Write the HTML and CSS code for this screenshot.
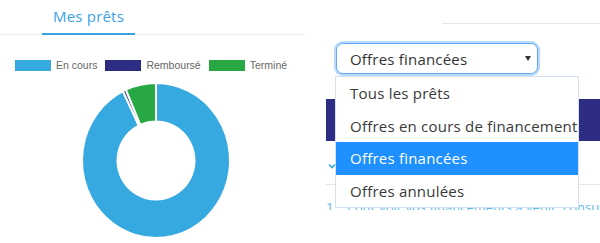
FILE: index.html
```html
<!DOCTYPE html>
<html lang="fr">
<head>
<meta charset="utf-8">
<title>Mes prêts</title>
<link rel="stylesheet" href="styles.css">
</head>
<body>
<div class="page">
  <section class="left">
    <nav class="tabs">
      <div class="tab active">Mes prêts</div>
    </nav>
    <ul class="legend">
      <li><span class="swatch s-blue"></span>En cours</li>
      <li><span class="swatch s-navy"></span>Remboursé</li>
      <li><span class="swatch s-green"></span>Terminé</li>
    </ul>
    <svg class="donut" width="300" height="165" viewBox="0 0 300 165">
      <path class="seg-blue" d="M156,5 A74,77.5 0 1 1 122.98,13.15 L138.82,47.6 A38.5,39 0 1 0 156,43.5 Z"/>
      <path class="seg-navy" d="M122.98,13.15 A74,77.5 0 0 1 125.90,11.70 L140.34,46.87 A38.5,39 0 0 0 138.82,47.6 Z"/>
      <path class="seg-green" d="M125.90,11.70 A74,77.5 0 0 1 156,5 L156,43.5 A38.5,39 0 0 0 140.34,46.87 Z"/>
    </svg>
  </section>
  <section class="right">
    <div class="topline"></div>
    <div class="table">
      <div class="thead"></div>
      <div class="row r1">
        <svg class="chev" width="8" height="6" viewBox="0 0 8 6"><path d="M1,1.5 L4,4.5 L7,1.5" fill="none" stroke="#36a9e1" stroke-width="1.6"/></svg>
      </div>
      <div class="row r2"><span class="rowtext">1 &nbsp;&nbsp; Pour voir vos financements à venir, consultez votre échéancier</span></div>
    </div>
  </section>

  <div class="select">
    <span class="select-value">Offres financées</span>
    <span class="caret"></span>
  </div>
  <ul class="menu">
    <li class="opt">Tous les prêts</li>
    <li class="opt">Offres en cours de financement</li>
    <li class="opt selected">Offres financées</li>
    <li class="opt">Offres annulées</li>
  </ul>
</div>
</body>
</html>
```
FILE: styles.css
```css
html, body {
  margin: 0;
  padding: 0;
  background: #ffffff;
}

.page {
  position: relative;
  width: 600px;
  height: 243px;
  overflow: hidden;
  display: flex;
  font-family: "Open Sans", "DejaVu Sans", sans-serif;
}

.left {
  width: 306px;
  flex: none;
  display: flex;
  flex-direction: column;
}

.tabs {
  height: 35px;
  box-sizing: border-box;
  border-bottom: 1px solid #eeeeee;
  display: flex;
  padding-left: 42px;
}

.tab {
  width: 93px;
  height: 35px;
  box-sizing: border-box;
  padding-top: 6px;
  text-align: center;
  font-size: 15px;
  line-height: 20px;
  letter-spacing: 0.2px;
  color: #3aa2e2;
}

.tab.active {
  border-bottom: 2px solid #3aa2e2;
}

.legend {
  list-style: none;
  margin: 25px 0 0 0;
  padding: 0 0 0 15px;
  display: flex;
  gap: 8px;
  height: 11px;
  font-family: "Liberation Sans", Arial, sans-serif;
  font-size: 10.5px;
  line-height: 11px;
  color: #666666;
}

.legend li {
  display: flex;
  align-items: center;
}

.swatch {
  width: 36px;
  height: 11px;
  margin-right: 5px;
  box-sizing: border-box;
}

.s-blue { background: #36a9e1; }
.s-navy { background: #2d2e83; border: 1px solid #28297a; }
.s-green { background: #27a844; }

.donut {
  display: block;
  margin-top: 7px;
}

.donut path {
  stroke: #ffffff;
  stroke-width: 2;
}

.seg-blue { fill: #36a9e1; }
.seg-navy { fill: #2d2e83; }
.seg-green { fill: #27a844; }

.right {
  flex: 1;
  display: flex;
  flex-direction: column;
}

.topline {
  margin: 23px 0 0 136px;
  height: 1px;
  background: #e8e8e8;
}

.table {
  margin: 75px 0 0 20px;
  display: flex;
  flex-direction: column;
}

.thead {
  height: 42px;
  background: #2d2e83;
}

.row {
  box-sizing: border-box;
}

.r1 {
  height: 44px;
  border-bottom: 1px solid #e6e6e6;
  padding: 22px 0 0 2px;
}

.chev {
  display: block;
}

.r2 {
  height: 25px;
  overflow: hidden;
  padding-top: 15px;
  font-size: 13px;
  line-height: 14px;
  color: #5db8e6;
  white-space: nowrap;
}

.select {
  position: absolute;
  left: 336px;
  top: 43px;
  width: 202px;
  height: 31px;
  box-sizing: border-box;
  border: 1px solid #62abf2;
  border-radius: 7px;
  box-shadow: 0 0 0 2px #b8d9fb;
  background: #ffffff;
  display: flex;
  align-items: center;
  padding: 0 6px 0 13px;
  font-size: 15px;
  letter-spacing: 0.2px;
  color: #333333;
}

.select-value {
  flex: 1;
}

.caret {
  width: 0;
  height: 0;
  border-left: 3px solid transparent;
  border-right: 3px solid transparent;
  border-top: 5px solid #333333;
}

.menu {
  position: absolute;
  left: 335px;
  top: 76px;
  width: 244px;
  box-sizing: border-box;
  margin: 0;
  padding: 0;
  list-style: none;
  background: #ffffff;
  border: 1px solid #d2e2f3;
  font-size: 15px;
  letter-spacing: 0.22px;
  color: #3a3a3a;
}

.opt {
  height: 32.5px;
  line-height: 32.5px;
  padding-left: 14px;
  white-space: nowrap;
  overflow: hidden;
}

.opt.selected {
  background: #1e90ff;
  color: #ffffff;
}
```
